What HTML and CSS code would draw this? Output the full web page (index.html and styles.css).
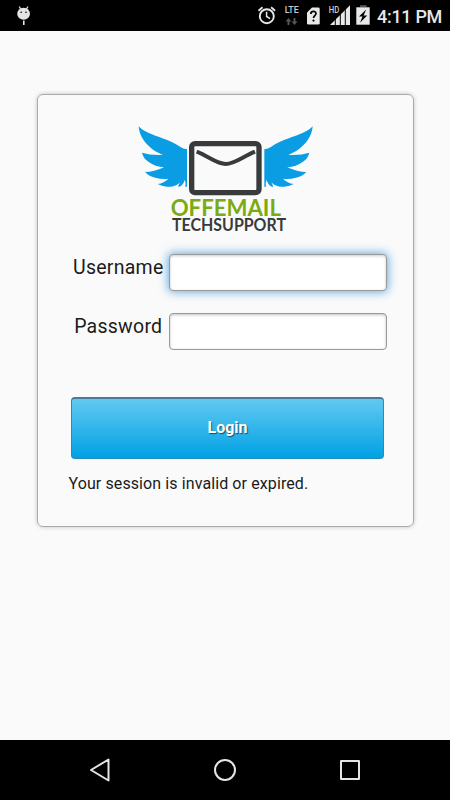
FILE: index.html
```html
<!DOCTYPE html>
<html lang="en">
<head>
<meta charset="utf-8">
<title>Login</title>
<link rel="stylesheet" href="styles.css">
</head>
<body>
<header class="status">
  <svg class="droid" width="60" height="31" viewBox="0 0 60 31">
    <path d="M19.2 6.7l2 3M28 6.7l-2 3" stroke="#e4e4e4" stroke-width="1.2"/>
    <ellipse cx="23.6" cy="13.8" rx="6.4" ry="6" fill="#e4e4e4"/>
    <circle cx="21.2" cy="12.2" r=".8"/><circle cx="26" cy="12.2" r=".8"/>
    <path d="M23.8 20.5v4.6" stroke="#e4e4e4" stroke-width="1.6"/>
  </svg>
  <svg class="signals" width="125" height="31" viewBox="245 0 125 31">
    <g fill="none" stroke="#e8e8e8">
      <circle cx="266.8" cy="16.2" r="7" stroke-width="1.9"/>
      <path d="M266.6 11.7v4.8l3.5 2.2" stroke-width="1.5"/>
      <path d="M258.5 10.7l4-3.4M275.1 10.7l-4-3.4" stroke-width="1.8"/>
    </g>
    <text x="284.7" y="12.8" class="tiny" textLength="14" lengthAdjust="spacingAndGlyphs">LTE</text>
    <path d="M288.5 18l3 3.4h-2V25h-2v-3.6h-2zM294.5 25l3-3.5h-2V18h-2v3.5h-2z" fill="#555"/>
    <path d="M312 7.5h6.3q1.4 0 1.4 1.4v14.3q0 1.4-1.4 1.4h-9.9q-1.4 0-1.4-1.4V12.6z" fill="#e8e8e8"/>
    <path d="M310.8 14c0-3.4 5.2-3.4 5.2-.4 0 2-2.5 2-2.5 4.4" fill="none" stroke="#000" stroke-width="1.7"/>
    <circle cx="313.5" cy="20.6" r="1.1"/>
    <path d="M350 5.3V25h-20z" fill="#e8e8e8"/>
    <path d="M335.3 15v10M340.3 10v15M345.3 6v19" stroke="#000" stroke-width="1"/>
    <text x="328.7" y="12.7" class="tiny" textLength="10.5" lengthAdjust="spacingAndGlyphs">HD</text>
    <path d="M360 5.2h6.7v2h-6.7z" fill="#555"/>
    <path d="M356.3 7.3h13.4v17.4h-13.4z" fill="#e8e8e8"/>
    <path d="M366.2 9.5l-7.2 7h3.5l-2.5 6.3 7.2-7.2h-3.6z"/>
  </svg>
  <span class="clock">4:11 PM</span>
</header>
<main class="page">
  <form class="card">
    <svg class="logo" width="190" height="125" viewBox="0 0 570 375">
      <g fill="#0b9de3">
        <path d="M26 34C48 60 110 68 150 95Q160 101 171 103V215H166Q169 205 164 194Q161 211 146 216Q143 215 150 202Q136 218 111 215Q94 214 83 207Q102 204 115 191Q97 194 76 188Q55 183 45 171Q72 171 102 157Q76 155 55 140Q39 129 36 113Q62 122 99 120C72 110 29 80 26 34Z"/>
        <path transform="translate(574 0) scale(-1 1)" d="M26 34C48 60 110 68 150 95Q160 101 171 103V215H166Q169 205 164 194Q161 211 146 216Q143 215 150 202Q136 218 111 215Q94 214 83 207Q102 204 115 191Q97 194 76 188Q55 183 45 171Q72 171 102 157Q76 155 55 140Q39 129 36 113Q62 122 99 120C72 110 29 80 26 34Z"/>
      </g>
      <g fill="none" stroke="#383b3c">
        <rect x="185" y="86" width="202" height="147" rx="10" stroke-width="16"/>
        <path d="M200 110C238 125 260 147 287 147S338 125 375 110" stroke-width="12"/>
      </g>
      <text class="brand" x="122" y="303" textLength="331" lengthAdjust="spacingAndGlyphs">OFFEMAIL</text>
      <text class="sub" x="126" y="347" textLength="342" lengthAdjust="spacingAndGlyphs">TECHSUPPORT</text>
    </svg>
    <div class="row"><label for="u">Username</label><input class="field focus" id="u" type="text"></div>
    <div class="row"><label for="p">Password</label><input class="field" id="p" type="password"></div>
    <button class="login" type="button">Login</button>
    <p class="message">Your session is invalid or expired.</p>
  </form>
</main>
<nav class="nav">
  <svg width="24" height="26" viewBox="0 0 24 26"><path d="M20.5 2.5v21L3 13z"/></svg>
  <svg width="24" height="26" viewBox="0 0 24 26"><circle cx="12" cy="13" r="10"/></svg>
  <svg width="24" height="26" viewBox="0 0 24 26"><path d="M3 4h18v18H3z"/></svg>
</nav>
</body>
</html>
```
FILE: styles.css
```css
* { box-sizing: border-box; }
body {
  margin: 0;
  width: 450px;
  height: 800px;
  display: flex;
  flex-direction: column;
  overflow: hidden;
  background: #fafafa;
  color: #1b1b1b;
  font-family: Roboto, sans-serif;
}
.status {
  height: 31px;
  flex: none;
  display: flex;
  background: #000;
}
.signals { margin-left: 185px; }
.tiny { font: 500 8.5px Roboto, sans-serif; fill: #ccc; }
.clock {
  margin-left: 7px;
  font-size: 18px;
  letter-spacing: -.3px;
  line-height: 34px;
  font-weight: 500;
  color: #e8e8e8;
  white-space: nowrap;
}
.page { flex: 1; padding: 63px 36px 0 36.5px; }
.card {
  width: 377px;
  height: 433px;
  padding: 20px 0 0 31px;
  border: 1px solid #aaa;
  border-radius: 6px;
  box-shadow: 0 0 4px rgba(0, 0, 0, .22);
}
.logo { display: block; margin-left: 61.5px; }
.brand { font: 700 70px Lato, sans-serif; fill: #7caa12; }
.sub { font: 700 49px Lato, sans-serif; fill: #383b3c; }
.row {
  display: flex;
  height: 37px;
  margin-top: 13.5px;
}
.row + .row { margin-top: 22px; }
.row label {
  width: 100px;
  padding-left: .5px;
  padding-right: 1px;
  text-align: center;
  font-size: 19.5px;
  line-height: 28px;
  letter-spacing: .25px;
}
.field {
  width: 218.5px;
  height: 37px;
  padding: 0 8px;
  border: 1px solid #999;
  border-radius: 4px;
  background: #fff;
  box-shadow: inset 0 1px 3px rgba(0, 0, 0, .25);
}
.focus { box-shadow: 0 0 10px 1px rgba(35, 135, 215, .7), inset 0 1px 3px rgba(0, 0, 0, .2); }
.login {
  display: block;
  width: 313px;
  height: 62px;
  padding: 0 0 2px;
  margin: 47px 0 0 2.5px;
  border: 1px solid #258dba;
  border-top: 2px solid #477b99;
  border-radius: 4px;
  background: linear-gradient(#62c9f1, #00a1e4);
  color: #fff;
  font: 700 16px Roboto, sans-serif;
  text-shadow: 1px 1px 1px rgba(0, 0, 0, .55);
}
.message {
  margin: 15px 0 0;
  font-size: 16px;
  line-height: 20px;
  letter-spacing: .1px;
}
.nav {
  height: 60px;
  flex: none;
  display: flex;
  gap: 101px;
  padding: 17px 0 0 88px;
  background: #000;
}
.nav svg { fill: none; stroke: #e5e5e5; stroke-width: 2; stroke-linejoin: round; }
```
